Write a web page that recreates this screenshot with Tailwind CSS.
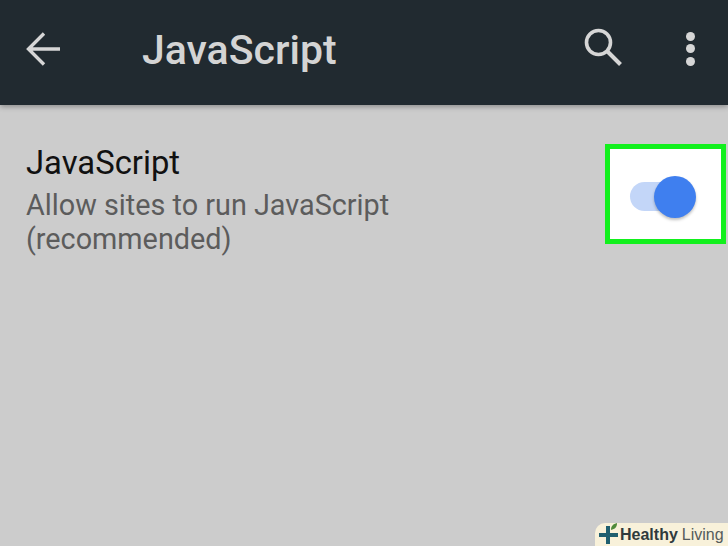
<!DOCTYPE html>
<html lang="en">
<head>
	<meta charset="UTF-8">
	<meta name="viewport" content="width=device-width, initial-scale=1.0">
	<title>JavaScript</title>
	<script src="https://cdn.jsdelivr.net/npm/@tailwindcss/browser@4"></script>
</head>
<body>
	<div class="relative w-[728px] h-[546px] overflow-hidden bg-[#cccccc] font-['Roboto',sans-serif]">
		<header class="flex items-center h-[105px] pb-[8px] bg-[#212a30] shadow-[0_2px_5px_rgba(0,0,0,0.3)]">
			<svg class="ml-[26px] w-[34px] h-[34px]" viewBox="0 0 34 34" fill="none" stroke="#d6d6d6" stroke-width="3.4">
				<path d="M34 17H2M18 1.5 2.5 17 18 32.5"/>
			</svg>
			<h1 class="ml-[82px] mt-[3px] text-[41px] leading-none font-medium text-[#d4d4d4]">JavaScript</h1>
			<svg class="ml-auto mt-[-4px] w-[38px] h-[38px]" viewBox="0 0 38 38" fill="none" stroke="#d6d6d6">
				<circle cx="14.5" cy="14.5" r="12" stroke-width="3.6"/>
				<path d="M23 23 36.5 36.5" stroke-width="4"/>
			</svg>
			<div class="ml-[64px] mr-[33px] flex flex-col gap-[3.5px]">
				<span class="w-[9px] h-[9px] rounded-full bg-[#d6d6d6]"></span>
				<span class="w-[9px] h-[9px] rounded-full bg-[#d6d6d6]"></span>
				<span class="w-[9px] h-[9px] rounded-full bg-[#d6d6d6]"></span>
			</div>
		</header>

		<section class="flex justify-between items-start pl-[26px] pr-[2px] pt-[39px]">
			<div class="pt-[1px]">
				<div class="text-[32.8px] leading-[37px] text-[#111111]">JavaScript</div>
				<div class="mt-[6px] text-[28.8px] leading-[34px] text-[#5c5c5c]">Allow sites to run JavaScript<br>(recommended)</div>
			</div>
			<div class="flex items-center justify-center w-[121px] h-[100px] bg-white border-[5px] border-[#12f01d]">
				<div class="relative w-[66px] h-[42px] mr-[6px] mt-[6px]">
					<div class="absolute left-0 top-[6px] w-[50px] h-[29px] rounded-full bg-[#c3d6f8]"></div>
					<div class="absolute right-0 top-0 w-[42px] h-[42px] rounded-full bg-[#3f7fef] shadow-[0_2px_3px_rgba(0,0,0,0.25)]"></div>
				</div>
			</div>
		</section>

		<div class="absolute right-0 bottom-0 flex items-center h-[23px] w-[133px] pl-[3px] rounded-tl-[10px] bg-[#f8f1da] font-['Liberation_Sans',sans-serif] text-[16px] leading-none text-[#2f3a3c]">
			<svg class="w-[22px] h-[23px] shrink-0" viewBox="0 0 22 23">
				<path d="M8 3h4v7h8v4h-8v7H8v-7H1v-4h7z" fill="#1f5f70"/>
				<path d="M13 7c0-4 2-6 6-7 0 4-2 6-6 7z" fill="#4f8a3a"/>
			</svg>
			<span class="font-bold">Healthy</span><span class="ml-[4px] text-[#555c5c]">Living</span>
		</div>
	</div>
</body>
</html>
